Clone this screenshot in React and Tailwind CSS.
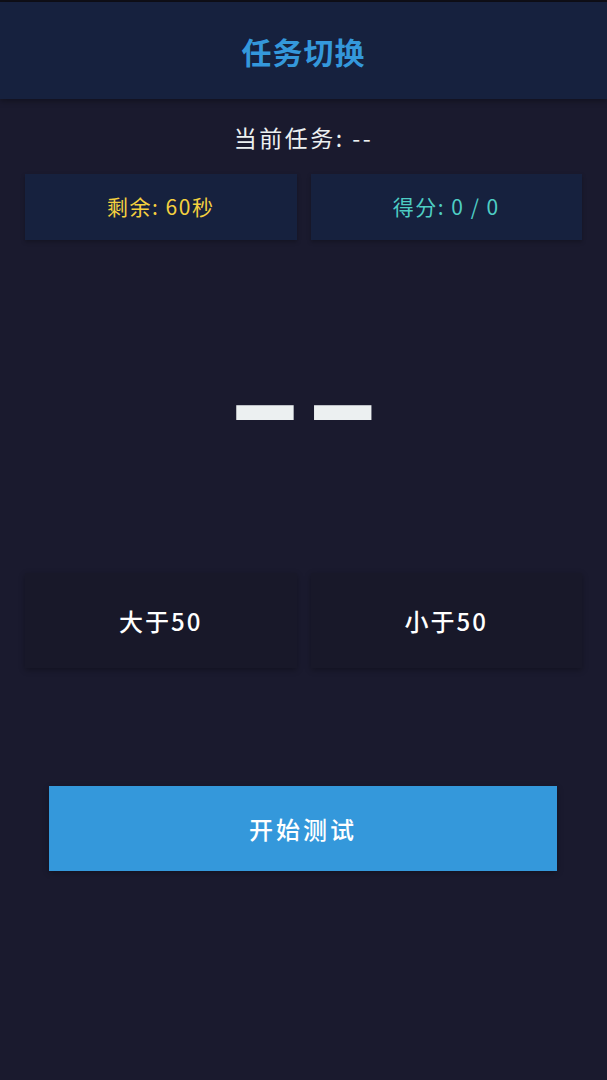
export default function App() {
  const font = { fontFamily: '"Noto Sans CJK SC", "Noto Sans", sans-serif' };
  return (
    <div className="min-h-[1080px] w-full bg-[#1a1a2e] flex flex-col" style={font}>
      <div className="h-[2px] bg-[#0f0f17]" />
      <header className="h-[97px] bg-[#16213e] flex items-center justify-center shadow-[0_2px_6px_rgba(0,0,0,0.35)]">
        <h1 className="text-[30px] font-bold text-[#3498db] tracking-[1px] leading-none">任务切换</h1>
      </header>
      <div className="mt-[23px] text-center text-[23px] text-[#ecf0f1] leading-[30px] tracking-[2.5px]">当前任务: --</div>
      <div className="mt-[22px] px-[25px] grid grid-cols-2 gap-[14px]">
        <div className="h-[66px] bg-[#16213e] flex items-center justify-center text-[21px] text-[#f4d03f] tracking-[1.5px] shadow-[0_2px_4px_rgba(0,0,0,0.25)]">剩余: 60秒</div>
        <div className="h-[66px] bg-[#16213e] flex items-center justify-center text-[21px] text-[#4ecdc4] tracking-[1.5px] shadow-[0_2px_4px_rgba(0,0,0,0.25)]">得分: 0 / 0</div>
      </div>
      <div className="h-[333px] flex items-center justify-center overflow-hidden">
        <span className="inline-block text-[140px] font-bold text-[#ecf0f1] leading-none tracking-[0px] scale-x-[1.5] -translate-y-[15px]">--</span>
      </div>
      <div className="px-[25px] grid grid-cols-2 gap-[14px]">
        <button className="h-[95px] bg-[#181829] text-[24px] font-medium text-white tracking-[2px] shadow-[0_2px_6px_rgba(0,0,0,0.3)]">大于50</button>
        <button className="h-[95px] bg-[#181829] text-[24px] font-medium text-white tracking-[2px] shadow-[0_2px_6px_rgba(0,0,0,0.3)]">小于50</button>
      </div>
      <div className="mt-[118px] px-[49px] flex">
        <button className="w-[508px] h-[85px] bg-[#3498db] text-[24px] font-medium text-white tracking-[3px] shadow-[0_2px_6px_rgba(0,0,0,0.3)]">开始测试</button>
      </div>
    </div>
  );
}
